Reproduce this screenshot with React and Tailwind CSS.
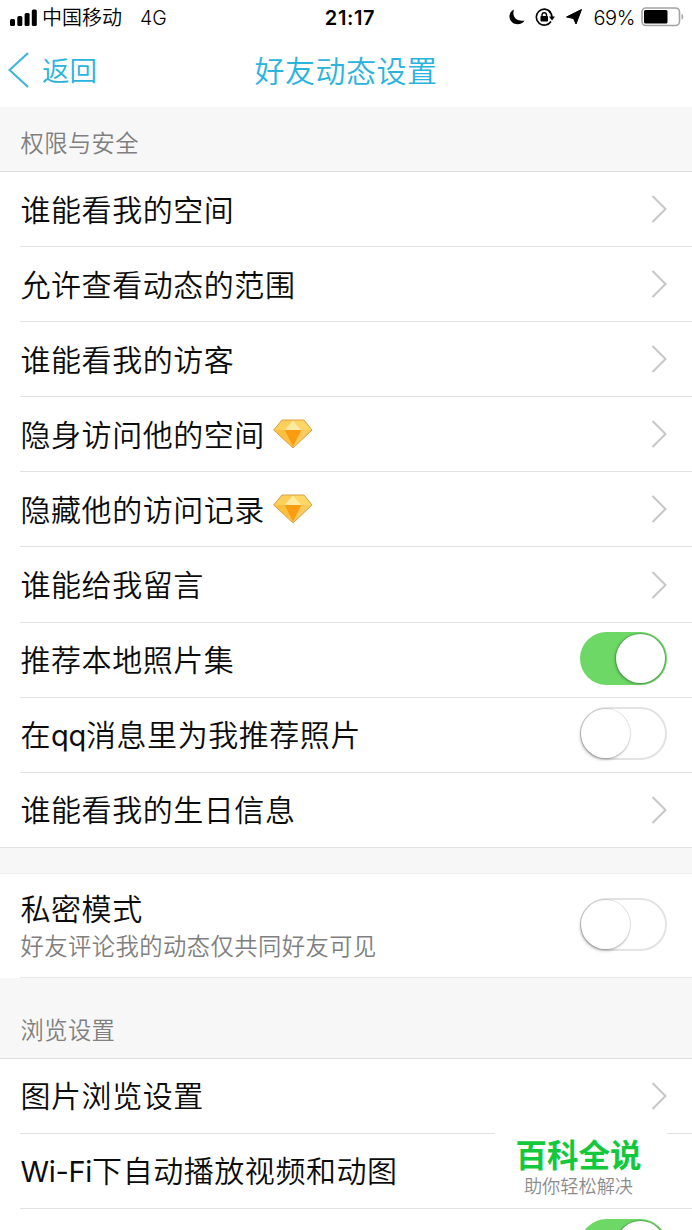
import React, { useState } from "react";

const privacyItems = [
  { label: "谁能看我的空间" },
  { label: "允许查看动态的范围" },
  { label: "谁能看我的访客" },
  { label: "隐身访问他的空间", vip: true },
  { label: "隐藏他的访问记录", vip: true },
  { label: "谁能给我留言" },
  { label: "推荐本地照片集", toggle: true, on: true },
  { label: "在qq消息里为我推荐照片", toggle: true, on: false },
  { label: "谁能看我的生日信息" },
];

const browseItems = [
  { label: "图片浏览设置" },
  { label: "Wi-Fi下自动播放视频和动图", toggle: true, on: true },
  { label: "", toggle: true, on: true },
];

const Chevron = () => (
  <svg className="mr-[25px] h-[28px] w-[16px] shrink-0" viewBox="0 0 16 28" fill="none">
    <path d="M1.5 1 14.5 14 1.5 27" stroke="#c6c6c8" strokeWidth="2" />
  </svg>
);

const Diamond = () => (
  <svg className="mb-[1px] ml-[8px] h-[30px] w-[40px] shrink-0" viewBox="0 0 40 30">
    <path d="M9 1H31L39 11 20 29 0.500 11Z" fill="#fbc54a" />
    <path d="M9 1 20 1.500 11.500 11H0.500Z" fill="#fbcf58" />
    <path d="M31 1 20 1.500 28.500 11H39Z" fill="#fcd766" />
    <path d="M20 1.500 28.500 11H11.500Z" fill="#feeaa0" />
    <path d="M11.500 11H28.500L20 28Z" fill="#f99c12" />
    <path d="M0.500 11H11.500L20 28Z" fill="#fcc040" />
    <path d="M39 11H28.500L20 28Z" fill="#fcc95c" />
    <path d="M9 1H31L39 11 20 29 0.700 11Z" fill="none" stroke="#d9a24a" strokeWidth="1" strokeLinejoin="round" />
  </svg>
);

const Toggle = ({ defaultOn }) => {
  const [on, setOn] = useState(defaultOn);

  return (
    <button
      role="switch"
      aria-checked={on}
      onClick={() => setOn(!on)}
      className={`mr-[25px] mb-[2px] flex h-[53px] w-[87px] shrink-0 items-center rounded-full ${
        on ? "justify-end bg-[#6ed866] pr-[2px]" : "justify-start border-2 border-[#e3e3e3] bg-white"
      }`}
    >
      <span
        className={`h-[49px] w-[49px] rounded-full bg-white ${
          on
            ? "shadow-[0_0_0_1px_rgba(60,130,60,0.45),-1px_1px_3px_rgba(40,90,40,0.45)]"
            : "-ml-[1px] shadow-[0_0_0_1px_rgba(0,0,0,0.1),-1px_2px_3px_rgba(0,0,0,0.22)]"
        }`}
      ></span>
    </button>
  );
};

// Latin runs are set a little smaller than the Chinese around them
const Label = ({ text }) =>
  text.split(/([A-Za-z-]+)/).map((part, index) =>
    /^[A-Za-z-]+$/.test(part) ? (
      <span key={index} className="text-[29px] font-normal tracking-[-0.3px]">{part}</span>
    ) : (
      <span key={index}>{part}</span>
    )
  );

const Row = ({ item }) => (
  <div className="group h-[75.1px] bg-white pl-[20px] last:pl-0">
    <div className="flex h-full items-center justify-between border-b border-[#e2e2e2] group-last:pl-[20px]">
      <div className="flex items-center">
        <div className="pt-[1px] pl-[0.5px] text-[30px] leading-[44px] tracking-[0.55px] text-[#0c0c0c]">
          <Label text={item.label} />
        </div>
        {item.vip && <Diamond />}
      </div>
      {item.toggle ? <Toggle defaultOn={item.on} /> : <Chevron />}
    </div>
  </div>
);

const StatusBar = () => (
  <div className="grid h-[34px] grid-cols-3 items-center text-[20px] leading-[30px] text-black">
    <div className="flex items-center pl-[10px]">
      <svg className="h-[17px] w-[27px]" viewBox="0 0 27 17">
        <rect x="0" y="10" width="5" height="7" rx="1.5" />
        <rect x="7.300" y="7" width="5" height="10" rx="1.5" />
        <rect x="14.600" y="4" width="5" height="13" rx="1.5" />
        <rect x="21.800" y="0.500" width="5" height="16.500" rx="1.5" />
      </svg>
      <span className="ml-[5px] pt-[1px]">中国移动</span>
      <span className="ml-[18px] pt-[1px] text-[19.5px]">4G</span>
    </div>
    <div className="pt-[1px] pl-[8px] text-center font-semibold tracking-[0.6px]">21:17</div>
    <div className="flex items-center justify-end pr-[8px]">
      <svg className="h-[16px] w-[16px]" viewBox="0 0 16 16">
        <path d="M5 0.500C0.500 2.500-1 8 2 12C5 16.500 13 16.500 15.500 11.500C8 13 2.500 8 5 0.500Z" />
      </svg>
      <svg className="ml-[10px] h-[18px] w-[20px]" viewBox="0 0 20 18" fill="none">
        <path d="M15.500 4A8 8 0 1 0 16 13.500" stroke="black" strokeWidth="1.600" />
        <path d="M13.800 3A8 8 0 0 1 17 9" stroke="black" strokeWidth="1.600" />
        <path d="M14 8.500H20L17 12.500Z" fill="black" />
        <rect x="5.500" y="8" width="7.500" height="5.500" rx="0.800" fill="black" />
        <path d="M7 8V6.500A2.300 2.300 0 0 1 11.500 6.500V8" stroke="black" strokeWidth="1.400" />
      </svg>
      <svg className="ml-[11px] h-[16px] w-[16px]" viewBox="0 0 16 16">
        <path d="M15.500 0.500 10 15 7.500 9.500 0.500 8Z" fill="black" stroke="black" strokeLinejoin="round" />
      </svg>
      <span className="ml-[11px] pt-[1px] tracking-[-0.4px]">69%</span>
      <svg className="ml-[6px] h-[20px] w-[43px]" viewBox="0 0 43 20" fill="none">
        <rect x="1" y="1" width="37.500" height="17.500" rx="4" stroke="#a3a3a3" strokeWidth="1.600" />
        <rect x="3" y="3" width="23.500" height="13.500" rx="1.500" fill="black" />
        <path d="M40.500 7C42.800 7.500 42.800 12 40.500 12.500Z" fill="#a3a3a3" />
      </svg>
    </div>
  </div>
);

const App = () => {
  return (
    <div className="relative h-[1230px] w-[692px] overflow-hidden bg-[#f7f7f7] font-['Inter','Noto_Sans_CJK_SC',sans-serif] font-[350]">
      {/* Header */}
      <header className="h-[107px] bg-white">
        <StatusBar />
        <nav className="grid h-[73px] grid-cols-3 items-center text-[#2ab3dd]">
          <a className="flex items-center pl-[8px] text-[27.5px] leading-[40px]">
            <svg className="mb-[2px] h-[36px] w-[21px]" viewBox="0 0 21 36" fill="none">
              <path d="M20 1 1.500 18 20 35" stroke="#40b4df" strokeWidth="2.200" />
            </svg>
            <span className="ml-[13px]">返回</span>
          </a>
          <h1 className="text-center text-[30px] leading-[44px] tracking-[0.5px] whitespace-nowrap">好友动态设置</h1>
        </nav>
      </header>

      {/* Privacy */}
      <h2 className="flex h-[65px] items-center border-b border-[#dedede] pt-[10px] pl-[20.5px] text-[23.3px] tracking-[0.4px] text-[#7f7f7f]">
        权限与安全
      </h2>
      <div>
        {privacyItems.map((item) => (
          <Row key={item.label} item={item} />
        ))}
      </div>

      {/* Private mode */}
      <div className="mt-[25px] h-[105px] border-t border-[#ececec] bg-white pl-[20px]">
        <div className="flex h-full items-center justify-between border-b border-[#e8e8e8]">
          <div className="pt-[4px] pl-[0.5px]">
            <div className="text-[30px] leading-[38px] tracking-[0.55px] text-[#0c0c0c]">私密模式</div>
            <div className="text-[23.3px] leading-[37px] tracking-[0.45px] text-[#7f7f7f]">
              好友评论我的动态仅共同好友可见
            </div>
          </div>
          <Toggle defaultOn={false} />
        </div>
      </div>

      {/* Browsing */}
      <h2 className="flex h-[81px] items-center border-b border-[#dedede] pt-[27px] pl-[20.5px] text-[23.3px] tracking-[0.4px] text-[#7f7f7f]">
        浏览设置
      </h2>
      <div>
        {browseItems.map((item, index) => (
          <Row key={index} item={item} />
        ))}
      </div>

      {/* Site badge */}
      <div className="absolute top-[1131px] left-[495px] flex h-[76px] w-[172px] flex-col items-center bg-white pt-[6px] pr-[5px]">
        <div className="text-[31.5px] leading-[38px] font-bold text-[#13c93b]">百科全说</div>
        <div className="text-[18.2px] leading-[22px] text-[#8c8c8c]">助你轻松解决</div>
      </div>
    </div>
  );
};

export default App;
